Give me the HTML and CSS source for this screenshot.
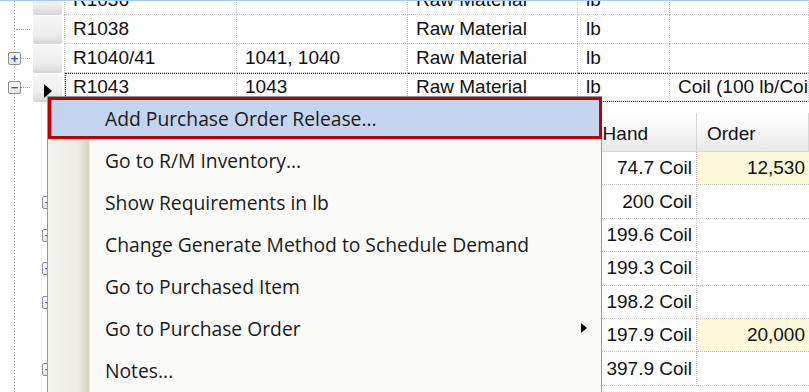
FILE: index.html
```html
<!DOCTYPE html>
<html lang="en">

<head>
    <meta charset="UTF-8">
    <title>Material Requirements</title>
    <link rel="stylesheet" href="styles.css">
</head>

<body>
    <div class="screen">
        <!-- parent grid -->
        <div class="grid">
            <div class="row partial">
                <div class="tree"></div>
                <div class="rowhead"><span class="rh"></span></div>
                <div class="cell c1">R1036</div>
                <div class="cell"></div>
                <div class="cell">Raw Material</div>
                <div class="cell">lb</div>
                <div class="cell"></div>
            </div>
            <div class="row">
                <div class="tree"><span class="branch solo"></span></div>
                <div class="rowhead"><span class="rh"></span></div>
                <div class="cell c1">R1038</div>
                <div class="cell"></div>
                <div class="cell">Raw Material</div>
                <div class="cell">lb</div>
                <div class="cell"></div>
            </div>
            <div class="row">
                <div class="tree"><span class="box">+</span><span class="branch"></span></div>
                <div class="rowhead"><span class="rh"></span></div>
                <div class="cell c1">R1040/41</div>
                <div class="cell">1041, 1040</div>
                <div class="cell">Raw Material</div>
                <div class="cell">lb</div>
                <div class="cell"></div>
            </div>
            <div class="row current">
                <div class="tree"><span class="box">&minus;</span><span class="branch"></span></div>
                <div class="rowhead"><span class="rh"><span class="pointer"></span></span></div>
                <div class="cell c1">R1043</div>
                <div class="cell">1043</div>
                <div class="cell">Raw Material</div>
                <div class="cell">lb</div>
                <div class="cell">Coil (100 lb/Coil)</div>
            </div>
        </div>

        <!-- child grid -->
        <div class="child">
            <div class="crow head">
                <div></div>
                <div></div>
                <div class="hcell"></div>
                <div class="hcell hand">On Hand</div>
                <div class="hcell">Order</div>
            </div>
            <div class="crow">
                <div></div>
                <div></div>
                <div class="dcell"></div>
                <div class="dcell num hand-col">74.7 Coil</div>
                <div class="dcell num filled">12,530</div>
            </div>
            <div class="crow">
                <div></div>
                <div><span class="box small">+</span></div>
                <div class="dcell"></div>
                <div class="dcell num hand-col">200 Coil</div>
                <div class="dcell num"></div>
            </div>
            <div class="crow">
                <div></div>
                <div><span class="box small">+</span></div>
                <div class="dcell"></div>
                <div class="dcell num hand-col">199.6 Coil</div>
                <div class="dcell num"></div>
            </div>
            <div class="crow">
                <div></div>
                <div><span class="box small">+</span></div>
                <div class="dcell"></div>
                <div class="dcell num hand-col">199.3 Coil</div>
                <div class="dcell num"></div>
            </div>
            <div class="crow">
                <div></div>
                <div><span class="box small">+</span></div>
                <div class="dcell"></div>
                <div class="dcell num hand-col">198.2 Coil</div>
                <div class="dcell num"></div>
            </div>
            <div class="crow">
                <div></div>
                <div></div>
                <div class="dcell"></div>
                <div class="dcell num hand-col">197.9 Coil</div>
                <div class="dcell num filled">20,000</div>
            </div>
            <div class="crow">
                <div></div>
                <div><span class="box small">+</span></div>
                <div class="dcell"></div>
                <div class="dcell num hand-col">397.9 Coil</div>
                <div class="dcell num"></div>
            </div>
        </div>

        <!-- context menu -->
        <div class="menu">
            <div class="item active">Add Purchase Order Release...</div>
            <div class="item">Go to R/M Inventory...</div>
            <div class="item">Show Requirements in lb</div>
            <div class="item">Change Generate Method to Schedule Demand</div>
            <div class="item">Go to Purchased Item</div>
            <div class="item">Go to Purchase Order <span class="sub"></span></div>
            <div class="item">Notes...</div>
        </div>
    </div>
</body>

</html>
```

FILE: styles.css
```css
body {
    margin: 0;
}

.screen {
    width: 809px;
    height: 392px;
    overflow: hidden;
    position: relative;
    box-sizing: border-box;
    border-top: 1px solid #a6cbf0;
    font-family: "Liberation Sans", Arial, sans-serif;
    font-size: 19px;
    color: #111;
    background: repeating-linear-gradient(to bottom, #a9a9a9 0 1px, transparent 1px 3px) 14px 0 / 1px 100% no-repeat, #fff;
}

/* parent grid */
.row {
    display: grid;
    grid-template-columns: 33px 32px 172px 171px 170px 92px 1fr;
    height: 29px;
}

.row.partial {
    margin-top: -15px;
}

.tree {
    display: flex;
    align-items: center;
}

.box {
    width: 11px;
    height: 11px;
    margin-left: 8px;
    border: 1px solid #8f9092;
    border-radius: 2px;
    background: linear-gradient(#ffffff, #e4e4e4);
    display: flex;
    align-items: center;
    justify-content: center;
    font-size: 13px;
    font-weight: bold;
    line-height: 1;
    color: #3a5c97;
}

.branch {
    width: 9px;
    border-top: 1px dotted #9a9a9a;
}

.branch.solo {
    margin-left: 16px;
    width: 14px;
}

.rowhead {
    display: flex;
    padding: 1px 2px 0 0;
    border-right: 1px dotted #c4c4c4;
}

.rh {
    flex: 1;
    background: linear-gradient(#f6f6f6, #eeeeee 70%, #dcdcdc);
    border-bottom: 2px solid #d6d6d6;
    border-radius: 2px;
    display: flex;
    align-items: center;
    justify-content: center;
}

.pointer {
    width: 0;
    height: 0;
    margin: 8px 0 0 0;
    border-left: 8px solid #000;
    border-top: 7px solid transparent;
    border-bottom: 7px solid transparent;
}

.cell {
    display: flex;
    align-items: center;
    padding: 0 0 1px 8px;
    white-space: nowrap;
    overflow: hidden;
    border-bottom: 1px dotted #c4c4c4;
    border-right: 1px dotted #c4c4c4;
}

.row.current .cell {
    border-top: 1px dotted #222;
    border-bottom: 1px dotted #222;
}

.row.current .c1 {
    border-left: 1px dotted #222;
    padding-left: 7px;
}

/* child grid */
.child {
    padding-top: 11px;
}

.crow {
    display: grid;
    grid-template-columns: 42px 20px 500px 135px 1fr;
    height: 33.4px;
}

.crow > div {
    display: flex;
    align-items: center;
}

.crow.head {
    height: 39px;
}

.hcell {
    padding: 3px 0 0 10px;
    background: linear-gradient(#ffffff, #f4f4f4 55%, #e9e9e9);
    border-bottom: 1px solid #d9d9d9;
    border-right: 1px solid #d7d7d7;
    white-space: nowrap;
}

.box.small {
    margin-left: 0;
}

.dcell {
    border-bottom: 1px dotted #c4c4c4;
    white-space: nowrap;
}

.num {
    justify-content: flex-end;
    padding-right: 4px;
}

.hand-col {
    border-right: 1px dotted #c4c4c4;
}

.filled {
    background: #fbf9d8;
}

/* context menu */
.menu {
    position: absolute;
    left: 47px;
    top: 95px;
    width: 553px;
    height: 320px;
    border: 1px solid #979797;
    font-family: "Open Sans", "Noto Sans", sans-serif;
    font-size: 19.3px;
    color: #1a1a1a;
    background: linear-gradient(to right, #f4f4ef 0, #ecece4 30px, #d4d4c5 41px, #ffffff 42px, #fbfbf9 44px);
}

.item {
    height: 42px;
    box-sizing: border-box;
    padding: 0 14px 0 57px;
    display: flex;
    align-items: center;
    justify-content: space-between;
    white-space: nowrap;
}

.item.active {
    margin: 0 -1px 0 0;
    padding-left: 54px;
    border: 3px solid #c00000;
    background: #c4d5ef;
    box-shadow: inset 1px 0 0 #6f9edb;
}

.sub {
    width: 0;
    height: 0;
    border-left: 6px solid #000;
    border-top: 5px solid transparent;
    border-bottom: 5px solid transparent;
}
```
